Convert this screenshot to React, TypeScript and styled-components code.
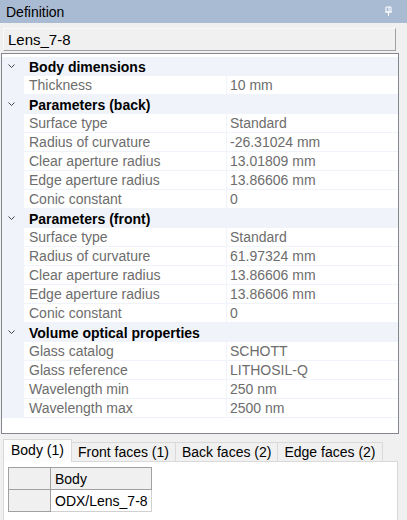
import styled, { createGlobalStyle } from 'styled-components';

type Prop = { label: string; value: string };
type Category = { title: string; props: Prop[] };

const categories: Category[] = [
  { title: 'Body dimensions', props: [{ label: 'Thickness', value: '10 mm' }] },
  {
    title: 'Parameters (back)',
    props: [
      { label: 'Surface type', value: 'Standard' },
      { label: 'Radius of curvature', value: '-26.31024 mm' },
      { label: 'Clear aperture radius', value: '13.01809 mm' },
      { label: 'Edge aperture radius', value: '13.86606 mm' },
      { label: 'Conic constant', value: '0' },
    ],
  },
  {
    title: 'Parameters (front)',
    props: [
      { label: 'Surface type', value: 'Standard' },
      { label: 'Radius of curvature', value: '61.97324 mm' },
      { label: 'Clear aperture radius', value: '13.86606 mm' },
      { label: 'Edge aperture radius', value: '13.86606 mm' },
      { label: 'Conic constant', value: '0' },
    ],
  },
  {
    title: 'Volume optical properties',
    props: [
      { label: 'Glass catalog', value: 'SCHOTT' },
      { label: 'Glass reference', value: 'LITHOSIL-Q' },
      { label: 'Wavelength min', value: '250 nm' },
      { label: 'Wavelength max', value: '2500 nm' },
    ],
  },
];

const tabs = ['Body (1)', 'Front faces (1)', 'Back faces (2)', 'Edge faces (2)'];

const GlobalStyle = createGlobalStyle`
  html, body {
    margin: 0;
    background: #f0f0f0;
    font-family: "Liberation Sans", Arial, sans-serif;
    font-size: 13px;
  }
`;

const PinIcon = () => (
  <svg width="9" height="11" viewBox="0 0 9 11">
    <path d="M2 1h5v5H2z M1 6h7 M4.5 6v4" fill="none" stroke="#fff" strokeWidth="1" />
    <path d="M5 1v5" stroke="#fff" strokeWidth="1" />
  </svg>
);

const App = () => {
  return (
    <Page>
      <GlobalStyle />
      <TitleBar>
        <span>Definition</span>
        <PinIcon />
      </TitleBar>
      <NameBox>Lens_7-8</NameBox>
      <Grid>
        {categories.map(cat => (
          <div key={cat.title}>
            <CategoryRow>
              <Chevron>
                <svg width="7" height="5" viewBox="0 0 7 5">
                  <path d="M0.5 0.5 L3.5 3.5 L6.5 0.5" fill="none" stroke="#444" strokeWidth="1" />
                </svg>
              </Chevron>
              <CategoryTitle>{cat.title}</CategoryTitle>
            </CategoryRow>
            {cat.props.map(p => (
              <PropRow key={cat.title + p.label}>
                <Margin />
                <Label>{p.label}</Label>
                <Value>{p.value}</Value>
              </PropRow>
            ))}
          </div>
        ))}
      </Grid>
      <TabStrip>
        {tabs.map((t, i) => (
          <Tab key={t} active={i === 0}>
            {t}
          </Tab>
        ))}
      </TabStrip>
      <TabPanel>
        <Table>
          <TableRow>
            <RowHeader />
            <HeaderCell>Body</HeaderCell>
          </TableRow>
          <TableRow>
            <RowHeader />
            <Cell>ODX/Lens_7-8</Cell>
          </TableRow>
        </Table>
      </TabPanel>
    </Page>
  );
};

export default App;

const Page = styled.div`
  width: 407px;
  height: 520px;
  overflow: hidden;
  display: flex;
  flex-direction: column;
  color: #000;

  & > * {
    flex-shrink: 0;
  }
`;

const TitleBar = styled.div`
  height: 23px;
  background: #a9bbd3;
  display: flex;
  align-items: center;
  justify-content: space-between;
  padding: 0 14px 0 6px;
  font-size: 14px;
`;

const NameBox = styled.div`
  height: 21px;
  margin: 5px 11px 0 3px;
  padding-left: 4px;
  display: flex;
  align-items: center;
  background: #f0f0f0;
  border-top: 1px solid #fafafa;
  border-left: 1px solid #fafafa;
  border-right: 1px solid #a0a0a0;
  border-bottom: 1px solid #a0a0a0;
  font-size: 15px;
`;

const Grid = styled.div`
  margin: 2px 8px 0 1px;
  height: 376px;
  border: 1px solid #828790;
  background: #fff;
  padding-top: 3px;
  box-sizing: content-box;
`;

const CategoryRow = styled.div`
  height: 19px;
  display: flex;
  align-items: center;
  background: #f0f4fa;
`;

const Chevron = styled.div`
  width: 22px;
  display: flex;
  justify-content: center;
  padding-right: 4px;
  box-sizing: border-box;
`;

const CategoryTitle = styled.span`
  font-weight: bold;
  font-size: 14px;
  padding-left: 5px;
`;

const PropRow = styled.div`
  height: 19px;
  display: flex;
  font-size: 14px;
  color: #6d6d6d;
`;

const Margin = styled.div`
  width: 22px;
  flex-shrink: 0;
  background: #f0f4fa;
`;

const Label = styled.div`
  width: 203px;
  flex-shrink: 0;
  padding-left: 5px;
  box-sizing: border-box;
  display: flex;
  align-items: center;
  border-bottom: 1px solid #f0f4fa;
  border-right: 1px solid #f0f4fa;
`;

const Value = styled.div`
  flex: 1;
  padding-left: 3px;
  display: flex;
  align-items: center;
  border-bottom: 1px solid #f0f4fa;
`;

const TabStrip = styled.div`
  display: flex;
  align-items: flex-end;
  height: 22px;
  padding-left: 3px;
  margin-top: 5px;
`;

const Tab = styled.div<{ active?: boolean }>`
  height: ${({ active }) => (active ? '23px' : '19px')};
  padding: 0 ${({ active }) => (active ? '7px' : '6px')};
  display: flex;
  align-items: ${({ active }) => (active ? 'flex-start' : 'center')};
  padding-top: ${({ active }) => (active ? '2px' : '0')};
  box-sizing: border-box;
  background: ${({ active }) => (active ? '#fcfcfc' : '#f0f0f0')};
  border: 1px solid #d9d9d9;
  border-bottom: none;
  margin-right: -1px;
  font-size: 14px;
  position: relative;
  z-index: ${({ active }) => (active ? 1 : 0)};
  margin-bottom: ${({ active }) => (active ? '-1px' : '0')};
`;

const TabPanel = styled.div`
  height: 70px;
  margin: 0 9px 0 3px;
  background: #fff;
  border: 1px solid #d9d9d9;
  padding: 5px 4px;
`;

const Table = styled.div`
  display: inline-flex;
  flex-direction: column;
  border-left: 1px solid #a0a0a0;
  border-top: 1px solid #a0a0a0;
`;

const TableRow = styled.div`
  display: flex;
  height: 22px;
`;

const RowHeader = styled.div`
  width: 41px;
  background: #f0f0f0;
  border-right: 1px solid #a0a0a0;
  border-bottom: 1px solid #a0a0a0;
`;

const HeaderCell = styled.div`
  width: 101px;
  background: #f0f0f0;
  border-right: 1px solid #a0a0a0;
  border-bottom: 1px solid #a0a0a0;
  display: flex;
  align-items: center;
  padding-left: 4px;
  box-sizing: border-box;
  font-size: 14px;
`;

const Cell = styled.div`
  width: 101px;
  background: #fff;
  border-right: 1px solid #d0d0d0;
  border-bottom: 1px solid #d0d0d0;
  display: flex;
  align-items: center;
  padding-left: 4px;
  box-sizing: border-box;
  font-size: 14px;
`;
